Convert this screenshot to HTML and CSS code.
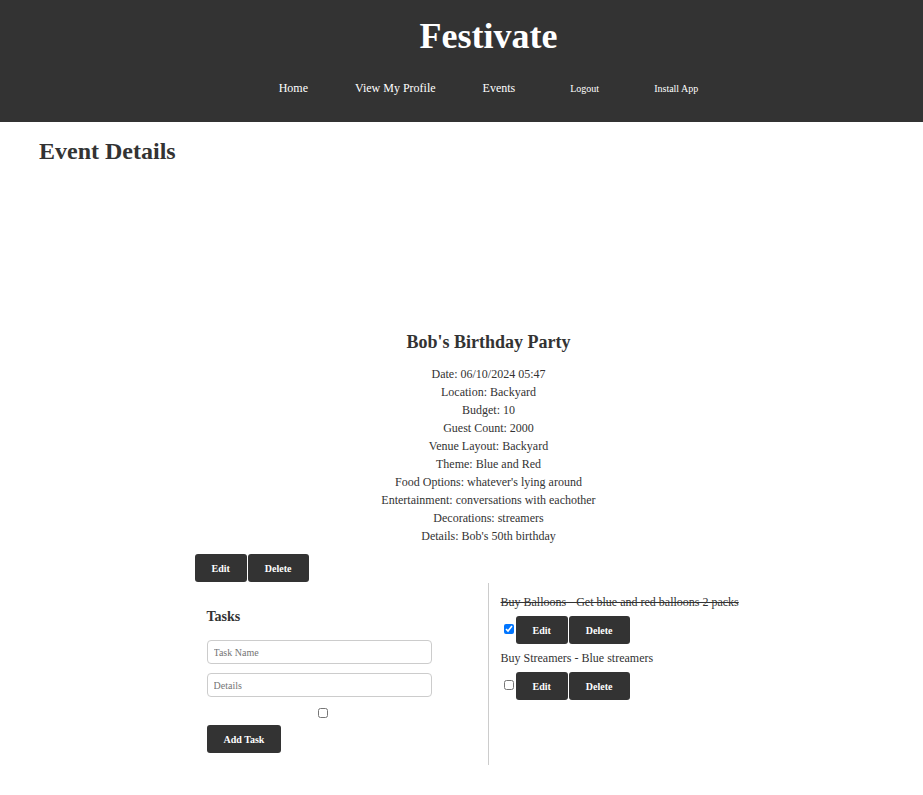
FILE: index.html
```html
<!DOCTYPE html>
<html lang="en">
<head>
<meta charset="utf-8">
<title>Festivate</title>
<link rel="stylesheet" href="styles.css">
</head>
<body>
<header class="site-header">
  <h1 class="brand">Festivate</h1>
  <nav class="nav">
    <a class="nav-link" href="#">Home</a>
    <a class="nav-link" href="#">View My Profile</a>
    <a class="nav-link" href="#">Events</a>
    <button class="nav-btn" type="button">Logout</button>
    <button class="nav-btn" type="button">Install App</button>
  </nav>
</header>
<main class="page">
  <h2 class="page-title">Event Details</h2>
  <section class="event">
    <h3 class="event-name">Bob's Birthday Party</h3>
    <div class="event-info">
      <p>Date: 06/10/2024 05:47</p>
      <p>Location: Backyard</p>
      <p>Budget: 10</p>
      <p>Guest Count: 2000</p>
      <p>Venue Layout: Backyard</p>
      <p>Theme: Blue and Red</p>
      <p>Food Options: whatever's lying around</p>
      <p>Entertainment: conversations with eachother</p>
      <p>Decorations: streamers</p>
      <p>Details: Bob's 50th birthday</p>
    </div>
    <div class="event-body">
      <div class="btn-row">
        <button class="btn" type="button">Edit</button>
        <button class="btn" type="button">Delete</button>
      </div>
      <div class="tasks">
        <div class="task-form-col">
          <h4 class="tasks-title">Tasks</h4>
          <form class="task-form">
            <input class="field" type="text" placeholder="Task Name">
            <input class="field" type="text" placeholder="Details">
            <div class="check-line"><input class="check" type="checkbox"></div>
            <button class="btn" type="button">Add Task</button>
          </form>
        </div>
        <div class="task-list">
          <div class="task">
            <p class="task-text done">Buy Balloons - Get blue and red balloons 2 packs</p>
            <div class="task-actions">
              <input class="check" type="checkbox" checked>
              <button class="btn" type="button">Edit</button>
              <button class="btn" type="button">Delete</button>
            </div>
          </div>
          <div class="task">
            <p class="task-text">Buy Streamers - Blue streamers</p>
            <div class="task-actions">
              <input class="check" type="checkbox">
              <button class="btn" type="button">Edit</button>
              <button class="btn" type="button">Delete</button>
            </div>
          </div>
        </div>
      </div>
    </div>
  </section>
</main>
</body>
</html>
```
FILE: styles.css
```css
* { box-sizing: border-box; }
html, body { margin: 0; padding: 0; }
body {
  font-family: "Liberation Serif", "Times New Roman", serif;
  color: #333;
  background: #fff;
}
.site-header {
  background: #333;
  color: #fff;
  padding: 16px 0 27px 54px;
  text-align: center;
}
.brand {
  margin: 0;
  font-size: 36px;
  line-height: 41px;
  font-weight: bold;
  color: #fff;
}
.nav {
  margin-top: 24px;
  height: 14px;
  display: flex;
  justify-content: center;
  align-items: center;
  gap: 47px;
}
.nav-link {
  color: #fff;
  text-decoration: none;
  font-size: 12px;
  line-height: 14px;
}
.nav-btn {
  background: transparent;
  border: 0;
  padding: 0;
  margin: 2px 0 0 8px;
  color: #fff;
  font-family: inherit;
  font-size: 10px;
  line-height: 12px;
}
.page { padding: 0; }
.page-title {
  margin: 15px 0 0 39px;
  font-size: 24px;
  line-height: 28px;
  font-weight: bold;
}
.event {
  margin-top: 167px;
  padding-left: 54px;
  display: flex;
  flex-direction: column;
  align-items: center;
}
.event-name {
  margin: 0;
  font-size: 18px;
  line-height: 21px;
  font-weight: bold;
}
.event-info {
  margin-top: 12px;
  text-align: center;
  font-size: 12px;
  line-height: 18px;
}
.event-info p { margin: 0; }
.event-body {
  width: 586px;
  margin-top: 9px;
  margin-right: 2px;
}
.btn-row {
  display: flex;
  gap: 1px;
}
.btn {
  height: 28px;
  padding: 0 17px;
  background: #333;
  color: #fff;
  border: 0;
  border-radius: 3px;
  font-family: "Liberation Serif", "Times New Roman", serif;
  font-size: 10px;
  font-weight: bold;
  cursor: pointer;
}
.tasks {
  margin-top: 1px;
  display: grid;
  grid-template-columns: 293px 1fr;
}
.task-form-col {
  padding: 12px;
}
.tasks-title {
  margin: 14px 0 15px 0;
  font-size: 14px;
  line-height: 16px;
  font-weight: bold;
}
.task-form {
  width: 225px;
  display: flex;
  flex-direction: column;
  align-items: flex-start;
}
.field {
  width: 225px;
  height: 24px;
  margin: 0 0 9px 0;
  padding: 0 6px;
  border: 1px solid #ccc;
  border-radius: 4px;
  font-family: "Liberation Serif", "Times New Roman", serif;
  font-size: 10px;
  color: #333;
}
.field::placeholder { color: #757575; }
.check-line {
  width: 100%;
  display: flex;
  justify-content: center;
  padding-left: 7px;
  margin: 2px 0 7px 0;
}
.check {
  width: 10px;
  height: 10px;
  margin: 0;
}
.task-list {
  border-left: 1px solid #ccc;
  padding: 10px 0 0 12px;
}
.task-text {
  margin: 0 0 5px 0;
  font-size: 12px;
  line-height: 18px;
}
.task-text.done { text-decoration: line-through; }
.task-actions {
  display: flex;
  align-items: center;
  gap: 1px;
  margin-bottom: 5px;
}
.task-actions .check { margin: 0 1px 0 3px; position: relative; top: -1px; }
```
